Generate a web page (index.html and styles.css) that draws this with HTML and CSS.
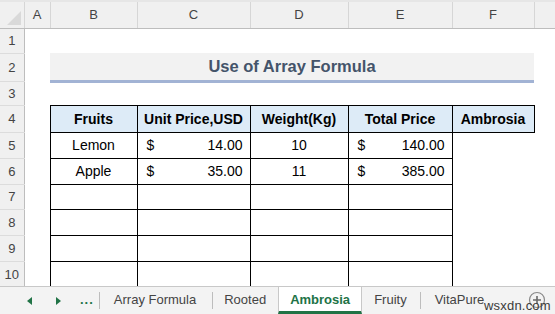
FILE: index.html
```html
<!DOCTYPE html>
<html lang="en">
<head>
    <meta charset="UTF-8">
    <title>Use of Array Formula</title>
    <link rel="stylesheet" href="styles.css">
</head>
<body>
    <div class="formula-edge"></div>
    <div class="grid-area">
        <table class="sheet">
            <colgroup>
                <col style="width:24px">
                <col style="width:26px">
                <col style="width:87px">
                <col style="width:113px">
                <col style="width:98px">
                <col style="width:104px">
                <col style="width:82px">
                <col style="width:21px">
            </colgroup>
            <tr class="col-heads">
                <th class="corner"><span class="corner-tri"></span></th>
                <th>A</th><th>B</th><th>C</th><th>D</th><th>E</th><th>F</th><th></th>
            </tr>
            <tr class="r1"><th class="rn">1</th><td></td><td></td><td></td><td></td><td></td><td></td><td></td></tr>
            <tr class="r2"><th class="rn">2</th><td></td><td colspan="5" class="title">Use of Array Formula</td><td></td></tr>
            <tr class="r3"><th class="rn">3</th><td></td><td></td><td></td><td></td><td></td><td></td><td></td></tr>
            <tr class="r4"><th class="rn">4</th><td></td>
                <td class="hd">Fruits</td><td class="hd">Unit Price,USD</td><td class="hd">Weight(Kg)</td><td class="hd">Total Price</td><td class="hd">Ambrosia</td><td></td></tr>
            <tr class="r5"><th class="rn">5</th><td></td>
                <td class="cell mid">Lemon</td>
                <td class="cell money"><span>$</span><span>14.00</span></td>
                <td class="cell mid">10</td>
                <td class="cell money"><span>$</span><span>140.00</span></td>
                <td></td><td></td></tr>
            <tr class="r6"><th class="rn">6</th><td></td>
                <td class="cell mid">Apple</td>
                <td class="cell money"><span>$</span><span>35.00</span></td>
                <td class="cell mid">11</td>
                <td class="cell money"><span>$</span><span>385.00</span></td>
                <td></td><td></td></tr>
            <tr class="r7"><th class="rn">7</th><td></td><td class="cell"></td><td class="cell"></td><td class="cell"></td><td class="cell"></td><td></td><td></td></tr>
            <tr class="r8"><th class="rn">8</th><td></td><td class="cell"></td><td class="cell"></td><td class="cell"></td><td class="cell"></td><td></td><td></td></tr>
            <tr class="r9"><th class="rn">9</th><td></td><td class="cell"></td><td class="cell"></td><td class="cell"></td><td class="cell"></td><td></td><td></td></tr>
            <tr class="r10"><th class="rn">10</th><td></td><td class="cell"></td><td class="cell"></td><td class="cell"></td><td class="cell"></td><td></td><td></td></tr>
        </table>
    </div>
    <div class="tabs">
        <span class="nav-arrow left"></span>
        <span class="nav-arrow right"></span>
        <span class="more">...</span>
        <span class="sep first"></span>
        <span class="tab">Array Formula</span>
        <span class="sep"></span>
        <span class="tab rooted">Rooted</span>
        <span class="tab active">Ambrosia</span>
        <span class="tab fruity">Fruity</span>
        <span class="sep tight"></span>
        <span class="tab">VitaPure</span>
        <span class="add-sheet">
            <svg width="18" height="18" viewBox="0 0 18 18">
                <circle cx="9" cy="9" r="7.5" fill="none" stroke="#8a8a8a" stroke-width="1.2"/>
                <path d="M9 5v8M5 9h8" stroke="#6a6a6a" stroke-width="1.6"/>
            </svg>
        </span>
        <span class="watermark">wsxdn.com</span>
    </div>
</body>
</html>
```
FILE: styles.css
```css
body {
    margin: 0;
    width: 555px;
    height: 314px;
    overflow: hidden;
    background: #ffffff;
    font-family: 'Liberation Sans', Arial, sans-serif;
    color: #000;
}

.formula-edge {
    height: 2px;
    background: #e6e6e6;
}

.grid-area {
    height: 284px;
    overflow: hidden;
}

.sheet {
    border-collapse: collapse;
    table-layout: fixed;
    width: 555px;
    font-size: 14px;
}
.sheet td, .sheet th {
    padding: 0;
    white-space: nowrap;
    overflow: hidden;
}

/* column letters */
.col-heads {
    height: 26px;
}
.col-heads th {
    background: #f0f0f0;
    color: #444;
    font-weight: normal;
    font-size: 13px;
    border-right: 1px solid #d6d6d6;
    border-bottom: 1px solid #bdbdbd;
}
.corner {
    position: relative;
}
.corner-tri {
    position: absolute;
    right: 3px;
    bottom: 3px;
    width: 0;
    height: 0;
    border-left: 14px solid transparent;
    border-bottom: 14px solid #d9d9d9;
}

/* row numbers */
.rn {
    background: #f0f0f0;
    color: #444;
    font-weight: normal;
    font-size: 13px;
    text-align: center;
    border-right: 1px solid #bdbdbd;
    border-bottom: 1px solid #dcdcdc;
}

.r1 { height: 25px; }
.r2 { height: 28px; }
.r3 { height: 24px; }
.r4 { height: 27px; }
.r5, .r6, .r8, .r9, .r10 { height: 26px; }
.r7 { height: 25px; }

.title {
    background: #f2f2f2;
    border-bottom: 3px solid #a2b3d4;
    color: #44546a;
    font-weight: bold;
    font-size: 16.5px;
    text-align: center;
    padding-top: 2px;
}

.hd {
    background: #ddebf7;
    border: 1px solid #000;
    font-weight: bold;
    text-align: center;
}

.cell {
    border: 1px solid #000;
}
.mid {
    text-align: center;
}
.money span:first-child {
    float: left;
    padding-left: 9px;
}
.money span:last-child {
    float: right;
    padding-right: 7px;
}

/* sheet tabs */
.tabs {
    height: 28px;
    box-sizing: border-box;
    border-top: 1px solid #c8c8c8;
    background: #f3f3f3;
    display: flex;
    align-items: center;
    font-size: 13px;
    color: #444;
    position: relative;
}
.nav-arrow {
    width: 0;
    height: 0;
    border-top: 4px solid transparent;
    border-bottom: 4px solid transparent;
}
.nav-arrow.left {
    margin-left: 27px;
    border-right: 5px solid #217346;
}
.nav-arrow.right {
    margin-left: 24px;
    border-left: 5px solid #217346;
}
.more {
    margin-left: 19px;
    color: #217346;
    font-weight: bold;
    letter-spacing: 1px;
    padding-bottom: 3px;
}
.sep {
    width: 1px;
    height: 17px;
    background: #bdbdbd;
    margin-left: 2px;
}
.sep.first {
    margin-left: 5px;
}
.sep.tight {
    margin-left: 0;
}
.tab {
    padding: 0 14px;
    height: 27px;
    line-height: 26px;
    box-sizing: border-box;
}
.tab.rooted {
    padding: 0 12px 0 11px;
}
.tab.fruity {
    padding: 0 13px 0 12px;
}
.tab.active {
    background: #ffffff;
    color: #217346;
    font-weight: bold;
    padding: 0;
    border-left: 1px solid #c8c8c8;
    border-right: 1px solid #c8c8c8;
    border-bottom: 3px solid #217346;
    line-height: 25px;
    width: 84px;
    text-align: center;
}
.add-sheet {
    position: absolute;
    left: 528px;
    top: 4px;
}
.watermark {
    position: absolute;
    left: 484px;
    top: 11px;
    font-size: 13px;
    color: #3a3a3a;
    letter-spacing: 0.2px;
}
```
